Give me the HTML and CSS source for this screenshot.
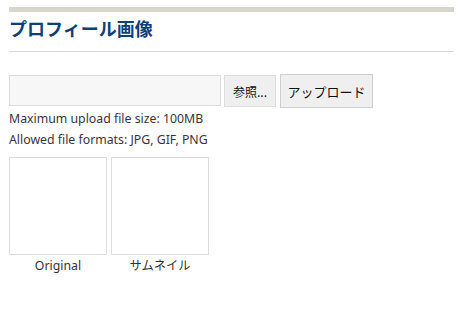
FILE: index.html
```html
<!DOCTYPE html>
<html lang="ja">
<head>
<meta charset="utf-8">
<link rel="stylesheet" href="styles.css">
</head>
<body>
<div class="page">
  <div class="topbar"></div>
  <h2 class="title">プロフィール画像</h2>
  <div class="upload">
    <div class="file-row">
      <input class="file-name" type="text">
      <button class="browse">参照...</button>
      <button class="send">アップロード</button>
    </div>
    <p class="note">Maximum upload file size: 100MB</p>
    <p class="note">Allowed file formats: JPG, GIF, PNG</p>
  </div>
  <div class="thumbs">
    <figure class="thumb">
      <div class="frame"></div>
      <figcaption>Original</figcaption>
    </figure>
    <figure class="thumb">
      <div class="frame"></div>
      <figcaption>サムネイル</figcaption>
    </figure>
  </div>
</div>
</body>
</html>
```
FILE: styles.css
```css
html, body { margin: 0; padding: 0; background: #fff; }
body {
  font-family: "Noto Sans", "Noto Sans CJK JP", sans-serif;
  font-size: 12.3px;
  color: #333;
}
.page { padding: 7px 8px 0 9px; }
.topbar { height: 5px; background: #d6d6cc; }
.title {
  margin: 0;
  padding: 4px 0 8px;
  font-size: 18px;
  line-height: 27px;
  font-weight: bold;
  color: #0d3f7a;
  border-bottom: 1px solid #dcdcd6;
}
.upload { margin-top: 22px; }
.file-row { display: flex; align-items: flex-start; gap: 3px; }
.file-name {
  box-sizing: border-box;
  width: 212px; height: 31px;
  margin: 1px 0 0;
  border: 1px solid #dddddd;
  background: #f7f7f7;
}
.browse, .send {
  box-sizing: border-box;
  margin: 0;
  font-family: "Noto Sans CJK JP", sans-serif;
  color: #111;
  background: #efefef;
}
.browse {
  width: 52px; height: 32px;
  margin-top: 1px;
  border: 1px solid #dddddd;
  font-size: 12px;
  padding: 0;
}
.send {
  width: 93px; height: 34px;
  margin-left: 1px;
  border: 1px solid #cfcfcf;
  font-size: 13px;
  padding: 0;
}
.note { margin: 0; line-height: 21px; color: #3b3340; }
.thumbs { display: flex; gap: 4px; margin-top: 7px; }
.thumb { margin: 0; width: 98px; }
.frame {
  box-sizing: border-box;
  width: 98px; height: 98px;
  border: 1px solid #dddddd;
}
.thumb figcaption {
  text-align: center;
  line-height: 20px;
  margin-top: 1px;
  color: #333;
}
```
